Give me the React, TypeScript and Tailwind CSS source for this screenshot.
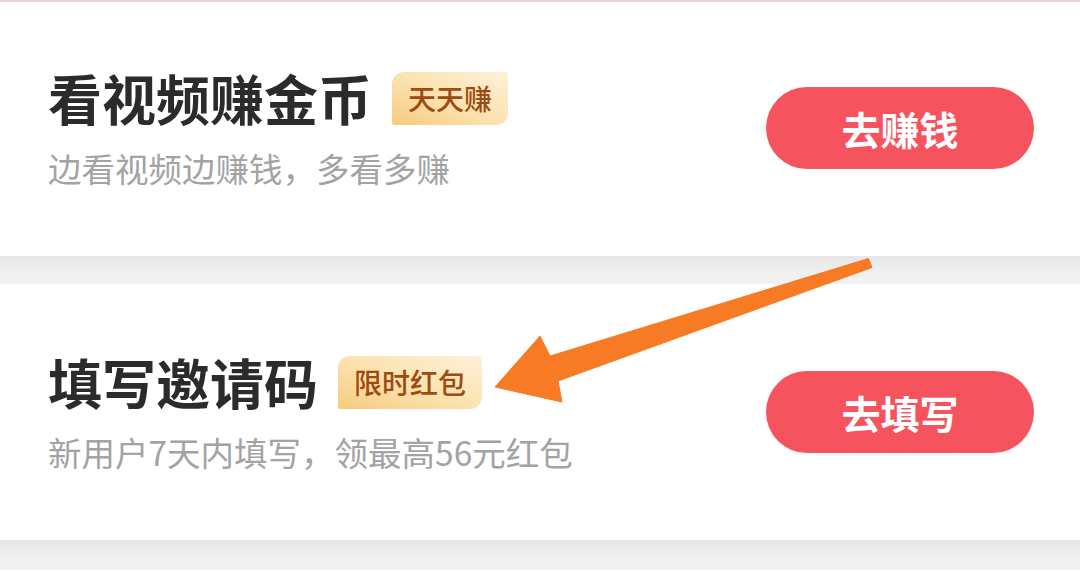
import React from 'react';

// ─── Data ────────────────────────────────────────────────────────────────────

const tasks = [
  {
    title: '看视频赚金币',
    badge: '天天赚',
    desc: '边看视频边赚钱，多看多赚',
    action: '去赚钱',
  },
  {
    title: '填写邀请码',
    badge: '限时红包',
    desc: '新用户7天内填写，领最高56元红包',
    action: '去填写',
  },
];

const font = { fontFamily: '"Noto Sans CJK SC", "Noto Sans", sans-serif' };

// ─── Pieces ──────────────────────────────────────────────────────────────────

function Badge({ children }: { children: React.ReactNode }) {
  return (
    <span className="flex h-[53px] items-center rounded-tl-[12px] rounded-br-[12px] rounded-tr-[4px] rounded-bl-[2px] bg-gradient-to-tr from-[#f6cb7e] via-[#fbe3b0] to-[#fdf1d9] px-4 text-[28px] font-medium leading-none text-[#9e4a10]">
      {children}
    </span>
  );
}

function TaskCard({ title, badge, desc, action }: (typeof tasks)[number]) {
  return (
    <div className="flex h-[256px] items-center justify-between bg-white pl-[48px] pr-[46px]">
      <div className="flex flex-col">
        <div className="flex items-center gap-[20px]">
          <span className="text-[54px] font-bold leading-[60px] text-[#2b2b2b]">{title}</span>
          <Badge>{badge}</Badge>
        </div>
        <span className="mt-[20px] text-[33.5px] leading-[40px] text-[#a3a3a3]">{desc}</span>
      </div>
      <button className="flex h-[82px] w-[268px] items-center justify-center rounded-full bg-[#f5535d] text-[39px] font-bold text-white">
        {action}
      </button>
    </div>
  );
}

function Gap({ h }: { h: string }) {
  return <div className={`${h} bg-gradient-to-b from-[#e6e6e6] via-[#efefef] to-[#f3f3f3]`} />;
}

// ─── Page ────────────────────────────────────────────────────────────────────

export default function App() {
  return (
    <div className="relative h-[574px] w-[1080px] overflow-hidden bg-white" style={font}>
      <div className="h-[2px] bg-[#e8d2d6]" />
      <div className="h-[254px] overflow-hidden">
        <div className="-mt-[2px]">
          <TaskCard {...tasks[0]} />
        </div>
      </div>
      <Gap h="h-[28px]" />
      <TaskCard {...tasks[1]} />
      <Gap h="h-[30px]" />

      {/* annotation arrow drawn over the cards */}
      <svg className="pointer-events-none absolute left-0 top-0" width="1080" height="574" viewBox="0 0 1080 574">
        <polygon
          points="868.5,258.5 872,267.5 558,381 562,402 495,387 540,336 550,356"
          fill="#f77a25"
          stroke="#f77a25"
          strokeWidth="1"
          strokeLinejoin="round"
        />
      </svg>
    </div>
  );
}
